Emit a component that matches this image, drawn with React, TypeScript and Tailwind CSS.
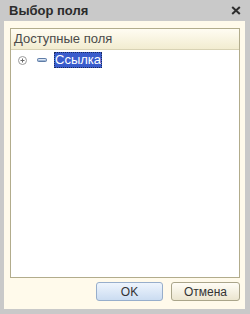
import React from "react";

const PlusIcon = () => (
  <svg width="9" height="9" viewBox="0 0 9 9" className="shrink-0">
    <circle cx="4.5" cy="4.5" r="4" fill="#fff" stroke="#9a9a9a" />
    <path d="M2.5 4.5h4M4.5 2.5v4" stroke="#6a6a6a" strokeWidth="1" />
  </svg>
);

const FieldIcon = () => (
  <svg width="10" height="4" viewBox="0 0 10 4" className="shrink-0">
    <rect x="0.5" y="0.5" width="9" height="3" rx="1" fill="#9fb6d4" stroke="#5f7ca6" />
    <path d="M1.5 1.5h7" stroke="#dfe9f6" />
  </svg>
);

const CloseIcon = () => (
  <svg width="10" height="9" viewBox="0 0 10 9">
    <path d="M1.2 1l7.6 7M8.8 1L1.2 8" stroke="#2e2e2e" strokeWidth="2" />
  </svg>
);

const App = () => {
  return (
    <div
      className="w-[250px] h-[314px] bg-[#c9c9c9] flex flex-col"
      style={{ fontFamily: '"Liberation Sans", Arial, sans-serif' }}
    >
      <div className="h-[21px] flex items-center justify-between pl-[9px] pr-[9px]">
        <span className="text-[13px] font-bold text-[#2b2b2b]">Выбор поля</span>
        <CloseIcon />
      </div>
      <div className="flex-1 flex flex-col ml-[4px] mr-[5px] mb-[5px] bg-[#fffaeb] pt-[7px] pl-[6px] pr-[5px]">
        <div className="h-[250px] flex flex-col border border-[#b2ac8c] bg-white">
          <div className="h-[21px] flex items-center pl-[3px] bg-gradient-to-b from-[#fffcf2] to-[#f2ecd0] border-b border-[#d8d2b4] text-[13px] text-[#4a4a4a]">
            Доступные поля
          </div>
          <div className="flex items-center h-[16px] mt-[2px] pl-[7px]">
            <PlusIcon />
            <div className="ml-[10px] flex">
              <FieldIcon />
            </div>
            <span className="ml-[7px] h-[16px] px-[1px] flex items-center bg-[#3a5ccc] text-white text-[13px] outline outline-1 outline-dotted outline-[#1a2a60] -outline-offset-1">
              Ссылка
            </span>
          </div>
        </div>
        <div className="flex justify-end gap-[8px] mt-[4px]">
          <button className="w-[67px] h-[19px] rounded-[3px] border border-[#97aecb] bg-gradient-to-b from-[#eef5fd] to-[#cbdcf1] text-[12px] text-[#333] leading-none">
            OK
          </button>
          <button className="w-[69px] h-[19px] rounded-[3px] border border-[#aaa58a] bg-gradient-to-b from-[#fffdf6] to-[#ebe5cf] text-[12px] text-[#333] leading-none">
            Отмена
          </button>
        </div>
      </div>
    </div>
  );
};

export default App;
